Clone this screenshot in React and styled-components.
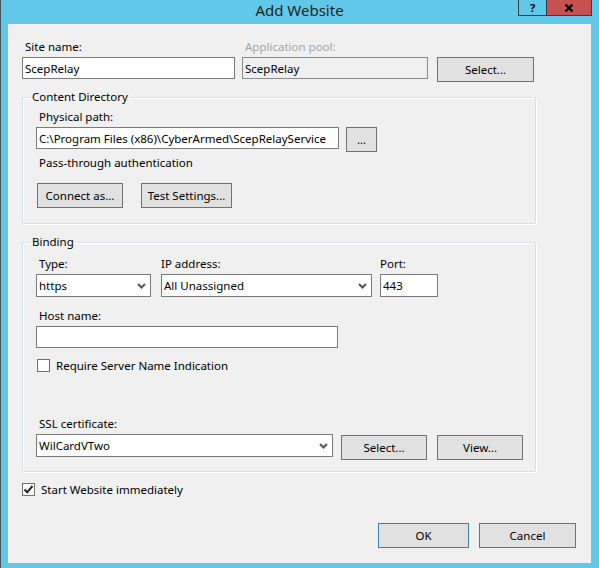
import React from 'react';
import styled, { createGlobalStyle } from 'styled-components';

const GlobalStyle = createGlobalStyle`
  html, body {
    margin: 0;
    padding: 0;
  }
  body {
    font-family: "Noto Sans", "Segoe UI", sans-serif;
    font-size: 11.5px;
    color: #000;
  }
`;

const Window = styled.div`
  width: 599px;
  height: 568px;
  box-sizing: border-box;
  background: #62c8ea;
  padding: 0 8px 5px 8px;
  display: flex;
  flex-direction: column;
  box-shadow: inset 1px 0 0 #3f5560;
`;

const TitleBar = styled.div`
  height: 24px;
  flex-shrink: 0;
  display: grid;
  grid-template-columns: 1fr auto 1fr;
  align-items: start;
`;

const Title = styled.div`
  grid-column: 2;
  font-size: 15px;
  line-height: 20px;
  color: #1e1e1e;
`;

const CaptionButtons = styled.div`
  grid-column: 3;
  justify-self: end;
  display: flex;
  margin-right: -1px;
`;

const CaptionButton = styled.div`
  width: ${p => p.$w}px;
  height: 16px;
  box-sizing: border-box;
  border: 1px solid #3b3b3b;
  border-top: none;
  border-left: ${p => (p.$close ? 'none' : '1px solid #3b3b3b')};
  background: ${p => (p.$close ? '#c75050' : 'transparent')};
  display: flex;
  align-items: center;
  justify-content: center;
  font-weight: bold;
  font-size: 11px;
  line-height: 14px;
  color: #000;
`;

const Content = styled.div`
  flex: 1;
  background: #f0f0f0;
  padding: 15px 15px 15px 14px;
  display: flex;
  flex-direction: column;
`;

const Row = styled.div`
  display: flex;
  align-items: flex-start;
  gap: ${p => p.$gap || 0}px;
  margin-top: ${p => p.$top || 0}px;
  margin-left: ${p => p.$left || 0}px;
`;

const Field = styled.div`
  display: flex;
  flex-direction: column;
  margin-right: ${p => p.$right || 0}px;
`;

const Label = styled.div`
  height: 16px;
  line-height: 16px;
  padding-left: ${p => (p.$flush ? 0 : 3)}px;
  margin-bottom: 2px;
  margin-top: ${p => p.$top || 0}px;
  color: ${p => (p.$disabled ? '#a5a5a5' : '#000')};
  white-space: nowrap;
`;

const Text = styled.div`
  height: 16px;
  line-height: 16px;
  padding-left: 3px;
  margin-top: ${p => p.$top || 0}px;
`;

const TextBox = styled.input`
  width: ${p => p.$w}px;
  height: ${p => p.$h || 22}px;
  box-sizing: border-box;
  margin: 0;
  padding: 0 2px;
  border: 1px solid ${p => (p.disabled ? '#8a8a8a' : '#7a7a7a')};
  background: ${p => (p.disabled ? '#f0f0f0' : '#fff')};
  font: inherit;
  color: #000;
  outline: none;
  border-radius: 0;
`;

const Combo = styled.div`
  width: ${p => p.$w}px;
  height: 23px;
  box-sizing: border-box;
  border: 1px solid #7a7a7a;
  background: #fff;
  display: flex;
  align-items: center;
  justify-content: space-between;
  padding: 0 4px 0 2px;
  white-space: nowrap;
`;

const Button = styled.button`
  width: ${p => p.$w}px;
  height: 25px;
  box-sizing: border-box;
  margin: 0;
  margin-top: ${p => p.$top || 0}px;
  padding: 0;
  border: 1px solid ${p => (p.$default ? '#3c7fb1' : '#707070')};
  background: #e1e1e1;
  font: inherit;
  color: #000;
  border-radius: 0;
`;

const Group = styled.fieldset`
  width: 514px;
  box-sizing: border-box;
  margin: ${p => p.$top}px 0 0 0;
  padding: ${p => p.$pad};
  min-width: 0;
  border: 1px solid #d5dfe5;
  border-radius: 2px;
  box-shadow: 1px 1px 0 #fff, inset 1px 1px 0 #fff;
`;

const Legend = styled.legend`
  padding: 0 2px;
  margin-left: -6px;
  line-height: 16px;
`;

const CheckRow = styled.label`
  display: flex;
  align-items: center;
  gap: 6px;
  height: 16px;
  margin-top: ${p => p.$top || 0}px;
  margin-left: ${p => p.$left || 0}px;
`;

const Box = styled.span`
  width: 13px;
  height: 13px;
  box-sizing: border-box;
  border: 1px solid #707070;
  background: #fff;
  display: flex;
  align-items: center;
  justify-content: center;
`;

const Footer = styled.div`
  margin-top: auto;
  display: flex;
  justify-content: flex-end;
  gap: 10px;
`;

const Chevron = () => (
  <svg width="9" height="6" viewBox="0 0 9 6">
    <path d="M1 1 L4.5 4.5 L8 1" fill="none" stroke="#555" strokeWidth="2" />
  </svg>
);

const CloseGlyph = () => (
  <svg width="10" height="8" viewBox="0 0 10 8">
    <path d="M1.5 0.5 L8.5 7.5 M8.5 0.5 L1.5 7.5" stroke="#000" strokeWidth="2.2" />
  </svg>
);

const CheckBox = ({ checked, children, ...rest }) => (
  <CheckRow {...rest}>
    <Box>
      {checked && (
        <svg width="11" height="11" viewBox="0 0 11 11">
          <path d="M1.5 5.5 L4.2 8.3 L9.5 2" fill="none" stroke="#222" strokeWidth="2" />
        </svg>
      )}
    </Box>
    <span>{children}</span>
  </CheckRow>
);

export default function App() {
  return (
    <>
      <GlobalStyle />
      <Window>
        <TitleBar>
          <Title>Add Website</Title>
          <CaptionButtons>
            <CaptionButton $w={29}>?</CaptionButton>
            <CaptionButton $w={45} $close>
              <CloseGlyph />
            </CaptionButton>
          </CaptionButtons>
        </TitleBar>

        <Content>
          <Row>
            <Field $right={7}>
              <Label>Site name:</Label>
              <TextBox $w={213} defaultValue="ScepRelay" />
            </Field>
            <Field $right={9}>
              <Label $disabled>Application pool:</Label>
              <TextBox $w={186} defaultValue="ScepRelay" disabled />
            </Field>
            <Field>
              <Label />
              <Button $w={97}>Select...</Button>
            </Field>
          </Row>

          <Group $top={7} $pad="4px 0 15px 13px">
            <Legend>Content Directory</Legend>
            <Label>Physical path:</Label>
            <Row $gap={7}>
              <TextBox $w={303} defaultValue="C:\Program Files (x86)\CyberArmed\ScepRelayService" />
              <Button $w={31}>...</Button>
            </Row>
            <Text $top={3}>Pass-through authentication</Text>
            <Row $gap={18} $top={12} $left={1}>
              <Button $w={86}>Connect as...</Button>
              <Button $w={91}>Test Settings...</Button>
            </Row>
          </Group>

          <Group $top={10} $pad="6px 0 11px 13px">
            <Legend>Binding</Legend>
            <Row>
              <Field $right={10}>
                <Label>Type:</Label>
                <Combo $w={115}>
                  <span>https</span>
                  <Chevron />
                </Combo>
              </Field>
              <Field $right={8}>
                <Label $flush>IP address:</Label>
                <Combo $w={211}>
                  <span>All Unassigned</span>
                  <Chevron />
                </Combo>
              </Field>
              <Field>
                <Label $flush>Port:</Label>
                <TextBox $w={58} $h={23} defaultValue="443" />
              </Field>
            </Row>
            <Label $top={11}>Host name:</Label>
            <TextBox $w={302} defaultValue="" />
            <CheckBox $top={9} $left={1}>Require Server Name Indication</CheckBox>
            <Label $top={43}>SSL certificate:</Label>
            <Row>
              <Combo $w={297} style={{ marginRight: 8 }}>
                <span>WilCardVTwo</span>
                <Chevron />
              </Combo>
              <Row $gap={10}>
                <Button $w={86} $top={1}>Select...</Button>
                <Button $w={86} $top={1}>View...</Button>
              </Row>
            </Row>
          </Group>

          <CheckBox checked $top={9}>Start Website immediately</CheckBox>

          <Footer>
            <Button $w={91} $default>OK</Button>
            <Button $w={97}>Cancel</Button>
          </Footer>
        </Content>
      </Window>
    </>
  );
}
